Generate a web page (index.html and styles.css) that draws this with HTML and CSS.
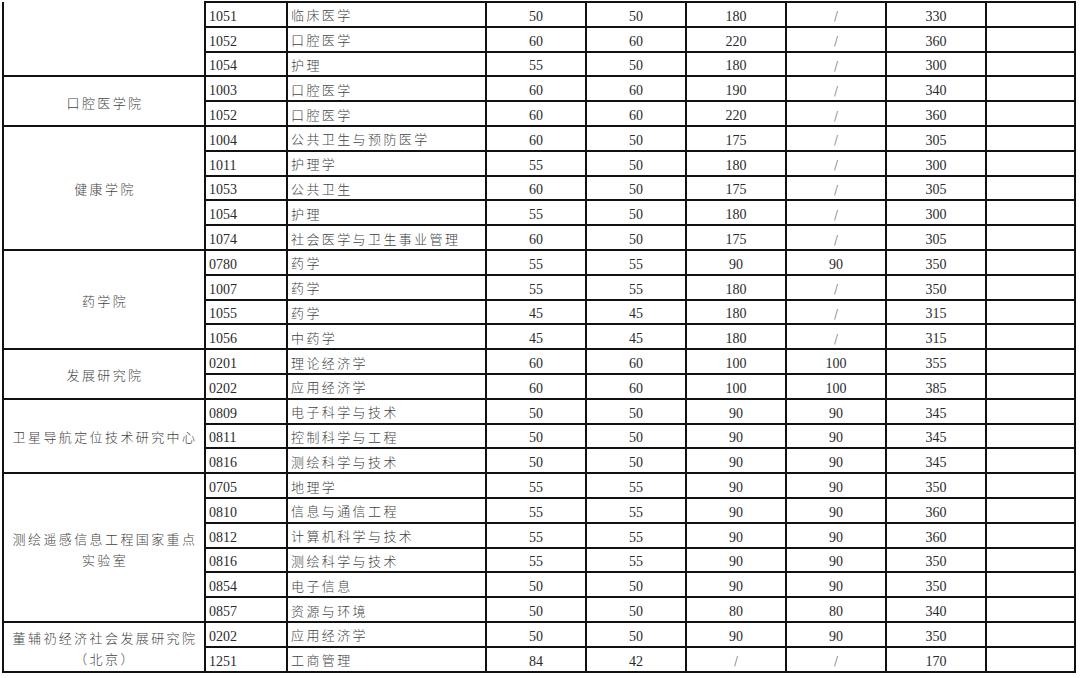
FILE: index.html
```html
<!DOCTYPE html>
<html lang="zh-CN">
<head>
<meta charset="utf-8">
<title>分数线</title>
<link rel="stylesheet" href="styles.css">
</head>
<body>
<table class="grid">
<colgroup>
<col class="c-unit"><col class="c-code"><col class="c-name"><col class="c-n"><col class="c-n"><col class="c-n"><col class="c-n"><col class="c-n"><col class="c-last">
</colgroup>
<tbody>
<tr><td class="unit cont" rowspan="3"></td><td class="code">1051</td><td class="name">临床医学</td><td class="num">50</td><td class="num">50</td><td class="num">180</td><td class="num sl">/</td><td class="num">330</td><td></td></tr>
<tr><td class="code">1052</td><td class="name">口腔医学</td><td class="num">60</td><td class="num">60</td><td class="num">220</td><td class="num sl">/</td><td class="num">360</td><td></td></tr>
<tr><td class="code">1054</td><td class="name">护理</td><td class="num">55</td><td class="num">50</td><td class="num">180</td><td class="num sl">/</td><td class="num">300</td><td></td></tr>

<tr><td class="unit" rowspan="2">口腔医学院</td><td class="code">1003</td><td class="name">口腔医学</td><td class="num">60</td><td class="num">60</td><td class="num">190</td><td class="num sl">/</td><td class="num">340</td><td></td></tr>
<tr><td class="code">1052</td><td class="name">口腔医学</td><td class="num">60</td><td class="num">60</td><td class="num">220</td><td class="num sl">/</td><td class="num">360</td><td></td></tr>

<tr><td class="unit" rowspan="5">健康学院</td><td class="code">1004</td><td class="name">公共卫生与预防医学</td><td class="num">60</td><td class="num">50</td><td class="num">175</td><td class="num sl">/</td><td class="num">305</td><td></td></tr>
<tr><td class="code">1011</td><td class="name">护理学</td><td class="num">55</td><td class="num">50</td><td class="num">180</td><td class="num sl">/</td><td class="num">300</td><td></td></tr>
<tr><td class="code">1053</td><td class="name">公共卫生</td><td class="num">60</td><td class="num">50</td><td class="num">175</td><td class="num sl">/</td><td class="num">305</td><td></td></tr>
<tr><td class="code">1054</td><td class="name">护理</td><td class="num">55</td><td class="num">50</td><td class="num">180</td><td class="num sl">/</td><td class="num">300</td><td></td></tr>
<tr><td class="code">1074</td><td class="name">社会医学与卫生事业管理</td><td class="num">60</td><td class="num">50</td><td class="num">175</td><td class="num sl">/</td><td class="num">305</td><td></td></tr>

<tr><td class="unit" rowspan="4">药学院</td><td class="code">0780</td><td class="name">药学</td><td class="num">55</td><td class="num">55</td><td class="num">90</td><td class="num">90</td><td class="num">350</td><td></td></tr>
<tr><td class="code">1007</td><td class="name">药学</td><td class="num">55</td><td class="num">55</td><td class="num">180</td><td class="num sl">/</td><td class="num">350</td><td></td></tr>
<tr><td class="code">1055</td><td class="name">药学</td><td class="num">45</td><td class="num">45</td><td class="num">180</td><td class="num sl">/</td><td class="num">315</td><td></td></tr>
<tr><td class="code">1056</td><td class="name">中药学</td><td class="num">45</td><td class="num">45</td><td class="num">180</td><td class="num sl">/</td><td class="num">315</td><td></td></tr>

<tr><td class="unit" rowspan="2">发展研究院</td><td class="code">0201</td><td class="name">理论经济学</td><td class="num">60</td><td class="num">60</td><td class="num">100</td><td class="num">100</td><td class="num">355</td><td></td></tr>
<tr><td class="code">0202</td><td class="name">应用经济学</td><td class="num">60</td><td class="num">60</td><td class="num">100</td><td class="num">100</td><td class="num">385</td><td></td></tr>

<tr><td class="unit" rowspan="3">卫星导航定位技术研究中心</td><td class="code">0809</td><td class="name">电子科学与技术</td><td class="num">50</td><td class="num">50</td><td class="num">90</td><td class="num">90</td><td class="num">345</td><td></td></tr>
<tr><td class="code">0811</td><td class="name">控制科学与工程</td><td class="num">50</td><td class="num">50</td><td class="num">90</td><td class="num">90</td><td class="num">345</td><td></td></tr>
<tr><td class="code">0816</td><td class="name">测绘科学与技术</td><td class="num">50</td><td class="num">50</td><td class="num">90</td><td class="num">90</td><td class="num">345</td><td></td></tr>

<tr><td class="unit" rowspan="6">测绘遥感信息工程国家重点<br>实验室</td><td class="code">0705</td><td class="name">地理学</td><td class="num">55</td><td class="num">55</td><td class="num">90</td><td class="num">90</td><td class="num">350</td><td></td></tr>
<tr><td class="code">0810</td><td class="name">信息与通信工程</td><td class="num">55</td><td class="num">55</td><td class="num">90</td><td class="num">90</td><td class="num">360</td><td></td></tr>
<tr><td class="code">0812</td><td class="name">计算机科学与技术</td><td class="num">55</td><td class="num">55</td><td class="num">90</td><td class="num">90</td><td class="num">360</td><td></td></tr>
<tr><td class="code">0816</td><td class="name">测绘科学与技术</td><td class="num">55</td><td class="num">55</td><td class="num">90</td><td class="num">90</td><td class="num">350</td><td></td></tr>
<tr><td class="code">0854</td><td class="name">电子信息</td><td class="num">50</td><td class="num">50</td><td class="num">90</td><td class="num">90</td><td class="num">350</td><td></td></tr>
<tr><td class="code">0857</td><td class="name">资源与环境</td><td class="num">50</td><td class="num">50</td><td class="num">80</td><td class="num">80</td><td class="num">340</td><td></td></tr>

<tr><td class="unit" rowspan="2">董辅礽经济社会发展研究院<br>（北京）</td><td class="code">0202</td><td class="name">应用经济学</td><td class="num">50</td><td class="num">50</td><td class="num">90</td><td class="num">90</td><td class="num">350</td><td></td></tr>
<tr><td class="code">1251</td><td class="name">工商管理</td><td class="num">84</td><td class="num">42</td><td class="num sl">/</td><td class="num sl">/</td><td class="num">170</td><td></td></tr>
</tbody>
</table>
</body>
</html>
```
FILE: styles.css
```css
html, body {
  margin: 0;
  padding: 0;
  background: #ffffff;
}

body {
  padding: 1px 0 0 2px;
}

.grid {
  border-collapse: collapse;
  table-layout: fixed;
  width: 1074px;
  font-family: "Liberation Serif", "Noto Sans CJK SC", serif;
  font-size: 14px;
  color: #2a2a2a;
}

.c-unit { width: 202px; }
.c-code { width: 82px; }
.c-name { width: 199px; }
.c-n { width: 100px; }
.c-last { width: 89px; }

.grid tr {
  height: 24.8px;
}

.grid td {
  border: 2px solid #111;
  padding: 0 4px;
  height: 24.8px;
  line-height: 16px;
  vertical-align: middle;
  white-space: nowrap;
  overflow: hidden;
  box-sizing: border-box;
}

.grid td.cont {
  border-top: none;
}

.grid td.unit {
  text-align: center;
  font-family: "Noto Sans CJK SC", sans-serif;
  font-weight: 300;
  font-size: 13px;
  letter-spacing: 2.4px;
  color: #444;
  line-height: 21px;
  white-space: normal;
  padding: 2px 2px 0 4px;
}

.grid td.code {
  text-align: left;
  padding: 5px 4px 0 3px;
}

.grid td.name {
  text-align: left;
  font-family: "Noto Sans CJK SC", sans-serif;
  font-weight: 300;
  font-size: 13px;
  letter-spacing: 2.4px;
  color: #444;
  padding: 2px 2px 0 3px;
}

.grid td.num {
  text-align: center;
  padding-top: 5px;
}

.grid td.sl {
  font-family: "DejaVu Sans", sans-serif;
  font-weight: 300;
  font-size: 12px;
  color: #555;
  padding-top: 4px;
}
```
